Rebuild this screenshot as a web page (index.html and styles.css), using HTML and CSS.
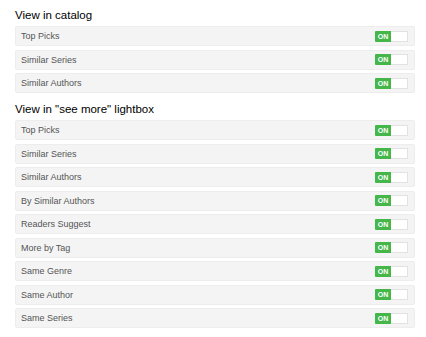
FILE: index.html
```html
<!DOCTYPE html>
<html>
<head>
<meta charset="utf-8">
<link rel="stylesheet" href="styles.css">
</head>
<body>
<div class="page">
  <section class="group">
    <h2 class="title">View in catalog</h2>
    <div class="row"><span class="label">Top Picks</span><span class="toggle"><span class="on">ON</span><span class="off"></span></span></div>
    <div class="row"><span class="label">Similar Series</span><span class="toggle"><span class="on">ON</span><span class="off"></span></span></div>
    <div class="row"><span class="label">Similar Authors</span><span class="toggle"><span class="on">ON</span><span class="off"></span></span></div>
  </section>
  <section class="group">
    <h2 class="title">View in "see more" lightbox</h2>
    <div class="row"><span class="label">Top Picks</span><span class="toggle"><span class="on">ON</span><span class="off"></span></span></div>
    <div class="row"><span class="label">Similar Series</span><span class="toggle"><span class="on">ON</span><span class="off"></span></span></div>
    <div class="row"><span class="label">Similar Authors</span><span class="toggle"><span class="on">ON</span><span class="off"></span></span></div>
    <div class="row"><span class="label">By Similar Authors</span><span class="toggle"><span class="on">ON</span><span class="off"></span></span></div>
    <div class="row"><span class="label">Readers Suggest</span><span class="toggle"><span class="on">ON</span><span class="off"></span></span></div>
    <div class="row"><span class="label">More by Tag</span><span class="toggle"><span class="on">ON</span><span class="off"></span></span></div>
    <div class="row"><span class="label">Same Genre</span><span class="toggle"><span class="on">ON</span><span class="off"></span></span></div>
    <div class="row"><span class="label">Same Author</span><span class="toggle"><span class="on">ON</span><span class="off"></span></span></div>
    <div class="row"><span class="label">Same Series</span><span class="toggle"><span class="on">ON</span><span class="off"></span></span></div>
  </section>
</div>
</body>
</html>
```
FILE: styles.css
```css
* { box-sizing: border-box; }
html, body { margin: 0; padding: 0; background: #fff; }
body { font-family: "Liberation Sans", Arial, Helvetica, sans-serif; color: #222; }
.page { padding: 7px 11px 0 15px; display: flex; flex-direction: column; gap: 8px; }
.group { display: flex; flex-direction: column; gap: 3.5px; }
.title { margin: 0 0 -0.5px 0; font-size: 11.5px; line-height: 16px; font-weight: normal; color: #000; }
.row {
  height: 20px;
  display: flex;
  align-items: center;
  justify-content: space-between;
  padding: 0 6px 0 5px;
  background: #f4f4f4;
  border: 1px solid #ededed;
  border-radius: 2px;
}
.label { font-size: 9px; color: #555; }
.toggle { display: flex; width: 33px; height: 11px; }
.on {
  width: 16px;
  background: #45b64a;
  color: #fff;
  font-size: 7px;
  font-weight: bold;
  line-height: 11px;
  text-align: center;
  border-radius: 1px 0 0 1px;
}
.off {
  flex: 1;
  background: #fff;
  border: 1px solid #e2e2e2;
  border-left: none;
  border-radius: 0 1px 1px 0;
}
```
